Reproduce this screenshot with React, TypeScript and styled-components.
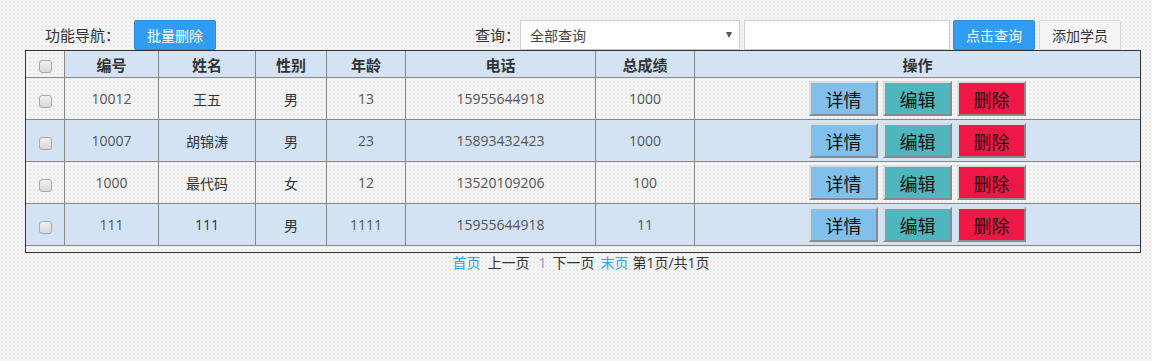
import React from "react"
import styled, { createGlobalStyle } from "styled-components"

const GlobalStyle = createGlobalStyle`
  html, body {
    margin: 0;
    padding: 0;
  }
  body {
    background-color: #f4f4f4;
    background-image: radial-gradient(#e9e9e9 0.7px, transparent 0.8px);
    background-size: 4px 4px;
    font-family: "Open Sans", "Noto Sans CJK SC", sans-serif;
    color: #333;
  }
`

const columns = [
  { key: "check", label: "", width: 39 },
  { key: "id", label: "编号", width: 94 },
  { key: "name", label: "姓名", width: 97 },
  { key: "sex", label: "性别", width: 71 },
  { key: "age", label: "年龄", width: 79 },
  { key: "phone", label: "电话", width: 190 },
  { key: "score", label: "总成绩", width: 99 },
  { key: "ops", label: "操作", width: 445 },
]

const students = [
  { id: "10012", name: "王五", sex: "男", age: "13", phone: "15955644918", score: "1000" },
  { id: "10007", name: "胡锦涛", sex: "男", age: "23", phone: "15893432423", score: "1000" },
  { id: "1000", name: "最代码", sex: "女", age: "12", phone: "13520109206", score: "100" },
  { id: "111", name: "111", sex: "男", age: "1111", phone: "15955644918", score: "11" },
]

const App = () => {
  return (
    <>
      <GlobalStyle />
      <Page>
        <Toolbar>
          <Group>
            <Label>功能导航：</Label>
            <BlueButton $gap={14}>批量删除</BlueButton>
          </Group>
          <Group>
            <Label>查询：</Label>
            <SelectWrap>
              <Select defaultValue="all">
                <option value="all">全部查询</option>
              </Select>
              <Arrow />
            </SelectWrap>
            <SearchInput type="text" />
            <BlueButton $gap={3}>点击查询</BlueButton>
            <PlainButton>添加学员</PlainButton>
          </Group>
        </Toolbar>

        <TableBox>
          <Table>
            <thead>
              <tr>
                {columns.map((c, i) => (
                  <HeadCell key={c.key} $w={c.width} $blank={i === 0}>
                    {i === 0 ? <Check type="checkbox" /> : c.label}
                  </HeadCell>
                ))}
              </tr>
            </thead>
            <tbody>
              {students.map((s, i) => (
                <Row key={i} $striped={i % 2 === 1}>
                  <Cell>
                    <Check type="checkbox" />
                  </Cell>
                  <NumCell>{s.id}</NumCell>
                  <Cell>{s.name}</Cell>
                  <Cell>{s.sex}</Cell>
                  <NumCell>{s.age}</NumCell>
                  <NumCell>{s.phone}</NumCell>
                  <NumCell>{s.score}</NumCell>
                  <Cell>
                    <Actions>
                      <ActionButton $bg="#80c0ea">详情</ActionButton>
                      <ActionButton $bg="#50b6bd">编辑</ActionButton>
                      <ActionButton $bg="#ef1745">删除</ActionButton>
                    </Actions>
                  </Cell>
                </Row>
              ))}
            </tbody>
          </Table>
        </TableBox>

        <Pager>
          <PageLink>首页</PageLink>
          <PageText $gap={9}>上一页</PageText>
          <CurrentPage>1</CurrentPage>
          <PageText $gap={6}>下一页</PageText>
          <PageLink $gap={4}>末页</PageLink>
          <PageText>第1页/共1页</PageText>
        </Pager>
      </Page>
    </>
  )
}

const Page = styled.div`
  width: 1116px;
  margin-left: 25px;
  padding-top: 20px;
`

const Toolbar = styled.div`
  display: flex;
  justify-content: space-between;
  align-items: center;
  height: 30px;
  padding: 0 20px;
`

const Group = styled.div`
  display: flex;
  align-items: center;
  height: 100%;
`

const Label = styled.span`
  font-family: "Noto Sans CJK SC", sans-serif;
  font-size: 15px;
  line-height: 30px;
  color: #333;
`

const BlueButton = styled.button`
  box-sizing: border-box;
  width: 82px;
  height: 30px;
  margin-left: ${(p) => p.$gap || 0}px;
  padding: 0;
  border: 1px solid #2a8de0;
  border-radius: 2px;
  background: #309cf4;
  color: #fff;
  font-family: "Noto Sans CJK SC", sans-serif;
  font-size: 14px;
  cursor: pointer;
`

const PlainButton = styled.button`
  box-sizing: border-box;
  width: 82px;
  height: 30px;
  margin-left: 4px;
  padding: 0;
  border: 1px solid #d8d8d8;
  border-radius: 2px;
  background: #f5f5f5;
  color: #333;
  font-family: "Noto Sans CJK SC", sans-serif;
  font-size: 14px;
  cursor: pointer;
`

const SelectWrap = styled.div`
  position: relative;
  width: 220px;
  height: 30px;
`

const Select = styled.select`
  box-sizing: border-box;
  width: 100%;
  height: 100%;
  appearance: none;
  border: 1px solid #cfcfcf;
  border-radius: 0;
  background: #fff;
  padding: 0 0 0 9px;
  font-family: "Noto Sans CJK SC", sans-serif;
  font-size: 14px;
  color: #444;
  outline: none;
`

const Arrow = styled.span`
  position: absolute;
  right: 8px;
  top: 12px;
  width: 0;
  height: 0;
  border-left: 3.5px solid transparent;
  border-right: 3.5px solid transparent;
  border-top: 6px solid #555;
  pointer-events: none;
`

const SearchInput = styled.input`
  box-sizing: border-box;
  width: 206px;
  height: 30px;
  margin-left: 4px;
  border: 1px solid #cfcfcf;
  background: #fff;
  padding: 0 6px;
  outline: none;
`

const TableBox = styled.div`
  border: 1px solid #333;
  padding-bottom: 6px;
`

const Table = styled.table`
  width: 1114px;
  table-layout: fixed;
  border-collapse: separate;
  border-spacing: 0;
`

const HeadCell = styled.th`
  box-sizing: border-box;
  width: ${(p) => p.$w}px;
  height: 27px;
  padding: 0;
  border-right: 1px solid #888;
  border-bottom: 1px solid #888;
  background: ${(p) => (p.$blank ? "transparent" : "#d4e3f4")};
  font-family: "Noto Sans CJK SC", sans-serif;
  font-size: 15px;
  font-weight: 700;
  color: #333;
  text-align: center;
  vertical-align: middle;
  &:last-child {
    border-right: none;
  }
`

const Row = styled.tr`
  background: ${(p) => (p.$striped ? "#d4e3f4" : "transparent")};
`

const Cell = styled.td`
  box-sizing: border-box;
  height: 42px;
  padding: 0;
  border-right: 1px solid #888;
  border-bottom: 1px solid #888;
  font-family: "Open Sans", "Noto Sans CJK SC", sans-serif;
  font-size: 14px;
  color: #333;
  text-align: center;
  vertical-align: middle;
  &:last-child {
    border-right: none;
  }
`

const NumCell = styled(Cell)`
  color: #555;
`

const Check = styled.input`
  appearance: none;
  box-sizing: border-box;
  display: block;
  width: 13px;
  height: 13px;
  margin: 5px auto 0;
  border: 1px solid #aaa;
  border-radius: 3px;
  background: linear-gradient(#f0f0f0, #d8d8d8);
`

const Actions = styled.div`
  display: flex;
  justify-content: center;
  gap: 5px;
`

const ActionButton = styled.button`
  box-sizing: border-box;
  width: 69px;
  height: 35px;
  padding: 0;
  border: 2px solid;
  border-color: #dcdcdc #8a8a8a #8a8a8a #dcdcdc;
  background: ${(p) => p.$bg};
  color: #111;
  font-family: "Noto Sans CJK SC", sans-serif;
  font-size: 18px;
  cursor: pointer;
`

const Pager = styled.div`
  display: flex;
  justify-content: center;
  padding-right: 4px;
  height: 20px;
  line-height: 20px;
  font-family: "Open Sans", "Noto Sans CJK SC", sans-serif;
  font-size: 14px;
`

const PageLink = styled.a`
  margin-right: ${(p) => (p.$gap === undefined ? 7 : p.$gap)}px;
  color: #2ca6ea;
  text-decoration: none;
  cursor: pointer;
`

const PageText = styled.span`
  margin-right: ${(p) => p.$gap || 0}px;
  color: #333;
`

const CurrentPage = styled.span`
  margin-right: 6px;
  color: #9c90d2;
`

export default App
